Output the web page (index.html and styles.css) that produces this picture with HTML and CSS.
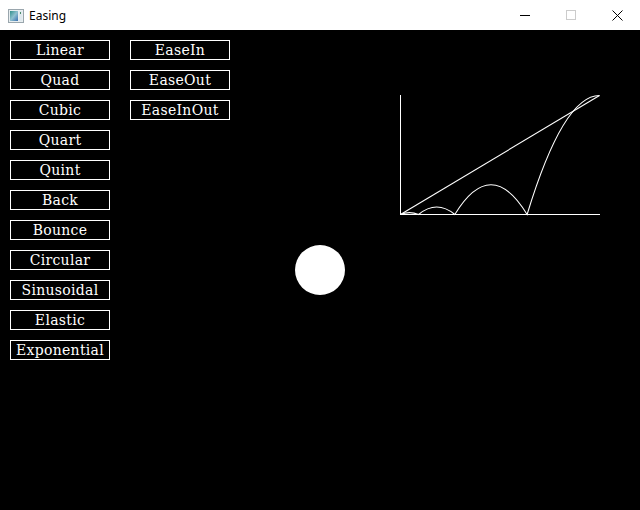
FILE: index.html
```html
<!DOCTYPE html>
<html>
<head>
<meta charset="utf-8">
<title>Easing</title>
<link rel="stylesheet" href="styles.css">
</head>
<body>
<div class="window">
  <div class="titlebar">
    <svg class="app-icon" width="16" height="14" viewBox="0 0 16 14">
      <defs>
        <linearGradient id="g" x1="0" y1="0" x2="1" y2="1">
          <stop offset="0" stop-color="#2f8f8a"/>
          <stop offset="0.5" stop-color="#8fc0cf"/>
          <stop offset="1" stop-color="#3a6fb0"/>
        </linearGradient>
      </defs>
      <rect x="0.5" y="0.5" width="15" height="13" fill="#e8eef0" stroke="#9aa6ad"/>
      <rect x="2" y="2" width="8" height="10" fill="url(#g)"/>
      <rect x="11" y="2" width="3" height="10" fill="#dfe9ee"/>
      <rect x="12" y="3" width="1" height="2" fill="#4a8a6a"/>
    </svg>
    <span class="title">Easing</span>
    <div class="controls">
      <div class="ctl">
        <svg width="10" height="10" viewBox="0 0 10 10"><path d="M0 5.5H10" stroke="#000" stroke-width="1"/></svg>
      </div>
      <div class="ctl">
        <svg width="10" height="10" viewBox="0 0 10 10"><rect x="0.5" y="0.5" width="9" height="9" fill="none" stroke="#cccccc"/></svg>
      </div>
      <div class="ctl">
        <svg width="11" height="11" viewBox="0 0 11 11"><path d="M0.5 0.5L10.5 10.5M10.5 0.5L0.5 10.5" stroke="#000" stroke-width="1"/></svg>
      </div>
    </div>
  </div>
  <div class="canvas">
    <div class="columns">
      <div class="col">
        <div class="btn">Linear</div>
        <div class="btn">Quad</div>
        <div class="btn">Cubic</div>
        <div class="btn">Quart</div>
        <div class="btn">Quint</div>
        <div class="btn">Back</div>
        <div class="btn">Bounce</div>
        <div class="btn">Circular</div>
        <div class="btn">Sinusoidal</div>
        <div class="btn">Elastic</div>
        <div class="btn">Exponential</div>
      </div>
      <div class="col">
        <div class="btn">EaseIn</div>
        <div class="btn">EaseOut</div>
        <div class="btn">EaseInOut</div>
      </div>
    </div>
    <svg class="drawing" width="640" height="480" viewBox="0 30 640 480">
      <g stroke="#fff" fill="none" stroke-width="1" shape-rendering="crispEdges">
        <path d="M400.5 95V215"/>
        <path d="M400 214.5H600"/>
      </g>
      <g stroke="#fff" fill="none" stroke-width="1.1">
        <path d="M400.5 214.5L599.5 95.5"/>
        <path d="M400.5 214.5Q409.5 210.8 418.6 214.5Q436.7 199.6 454.8 214.5Q491 155 527.1 214.5Q563.3 95.5 599.5 95.5"/>
      </g>
      <circle cx="320" cy="270" r="25" fill="#fff"/>
    </svg>
  </div>
</div>
</body>
</html>
```
FILE: styles.css
```css
html, body {
  margin: 0;
  padding: 0;
  background: #000;
}
.window {
  width: 640px;
  height: 510px;
  display: flex;
  flex-direction: column;
  overflow: hidden;
}
.titlebar {
  height: 30px;
  background: #fff;
  display: flex;
  align-items: center;
  flex-shrink: 0;
}
.app-icon {
  margin-left: 8px;
  margin-top: 1px;
}
.title {
  margin-left: 5px;
  font-family: "Noto Sans", "Open Sans", sans-serif;
  font-size: 12px;
  color: #000;
  flex: 1;
}
.controls {
  display: flex;
  height: 30px;
}
.ctl {
  width: 46px;
  height: 30px;
  display: flex;
  align-items: center;
  justify-content: center;
}
.canvas {
  position: relative;
  flex: 1;
  background: #000;
}
.columns {
  display: flex;
  gap: 20px;
  padding: 10px 0 0 10px;
}
.col {
  display: flex;
  flex-direction: column;
  gap: 10px;
}
.btn {
  box-sizing: border-box;
  width: 100px;
  height: 20px;
  border: 1px solid #fff;
  color: #fff;
  font-family: "DejaVu Serif", serif;
  font-size: 14px;
  line-height: 19px;
  text-align: center;
  letter-spacing: 0.3px;
}
.drawing {
  position: absolute;
  left: 0;
  top: 0;
}
```
